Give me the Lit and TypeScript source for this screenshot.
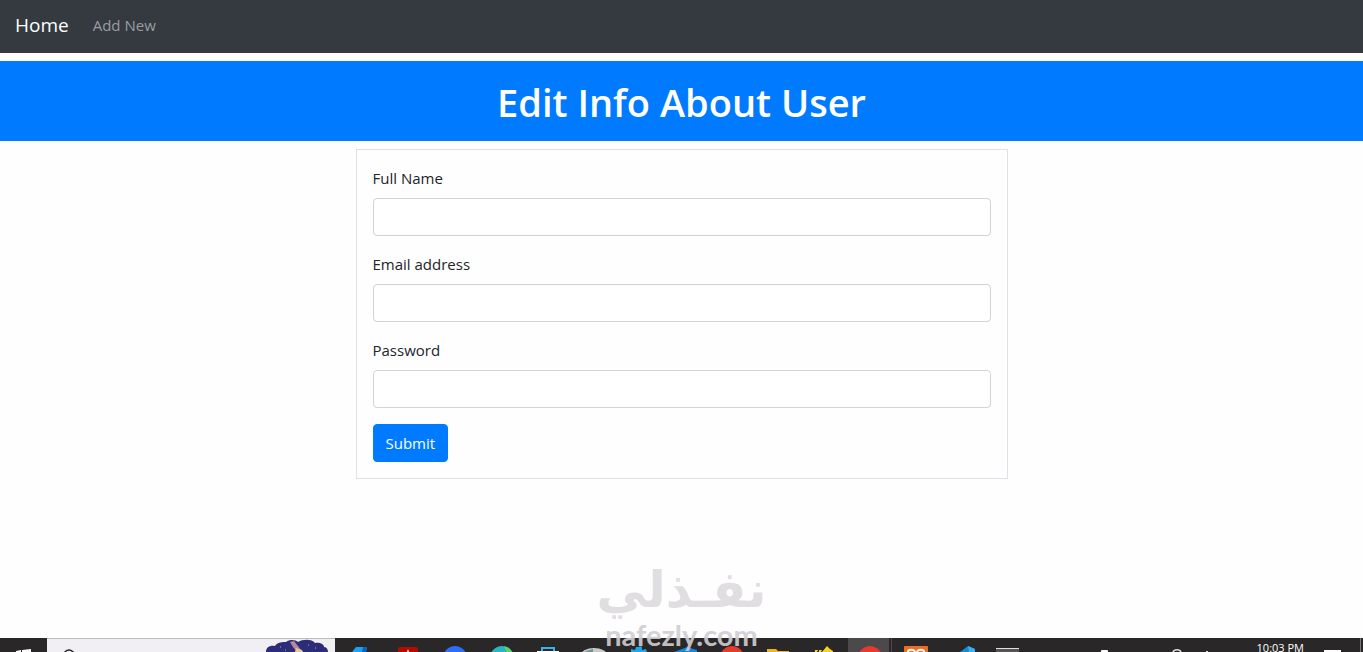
import { LitElement, html, svg, css } from "lit";
import { customElement } from "lit/decorators.js";

const apps = [
  { name: "Editor", art: svg`<path d="M18 9H29L28 14H14Z" fill="#1aa3f0"/><path d="M25 9h4l-1 5h-4z" fill="#0c62c4"/>` },
  { name: "Reader", art: svg`<rect x="14" y="9" width="20" height="12" rx="2" fill="#b30b00"/><path d="M24 11l1 3h-2z" fill="#fff"/>` },
  { name: "Calls", art: svg`<circle cx="25" cy="20" r="12" fill="#2f6df6"/>` },
  { name: "Browser", art: svg`<circle cx="26" cy="20" r="12" fill="#2cb5c0"/><path d="M28 8a12 12 0 0 1 9 8l-6-2z" fill="#5fd36a"/>` },
  { name: "Store", art: svg`<path d="M20 14V10H32V14" fill="none" stroke="#35b5e8" stroke-width="2"/><path d="M15 13H37V15H15Z" fill="#fff"/>` },
  { name: "Disk", art: svg`<ellipse cx="26" cy="17" rx="13" ry="7" fill="#c9cbca"/><path d="M18 13l7-2v3h-8z" fill="#6c9794"/>` },
  { name: "Settings", art: svg`<path d="M17 14v-3l4 1 1-3h3l1-1 2 1v3l4-1 1 3z" fill="#21a5ea"/>` },
  { name: "Code", art: svg`<path d="M14 14l8-3 5-2 10 3v2z" fill="#1687d9"/>` },
  { name: "Chrome", art: svg`<circle cx="26" cy="20" r="12" fill="#e53a2e"/>` },
  { name: "Files", art: svg`<path d="M15 11h9l2 2h11v4H15z" fill="#f0b51c"/>` },
  { name: "Notes", art: svg`<path d="M17 12h3l-1 2h-2zM21 12h3l-1 2h-2zM24 14l5-6 3 3 3 2v2z" fill="#f4d321"/>` },
  { name: "Chrome window", art: svg`<rect x="4" width="41" height="14" fill="#4b494b"/><circle cx="26" cy="20" r="12" fill="#e53a2e"/>` },
  { name: "XAMPP", art: svg`<path d="M1.500 0V14" stroke="#4b494b"/><rect x="14" y="8" width="24" height="14" rx="1" fill="#ee6c24"/><path d="M18 14c0-3 6-3 7 0m2 0c1-3 7-3 7 0" fill="none" stroke="#fff" stroke-width="2"/>` },
  { name: "Visual Studio Code", art: svg`<path d="M24 14l8-6 7 3v3z" fill="#168bd2"/><path d="M32 8l7 3v3h-6z" fill="#3cb0ef"/>` },
  { name: "Terminal", art: svg`<path d="M14 10H37V14H14Z" fill="#555"/><path d="M14 10.500H37" stroke="#e0e0e0"/>` },
];

const fields = [
  { id: "name", label: "Full Name", type: "text" },
  { id: "email", label: "Email address", type: "email" },
  { id: "password", label: "Password", type: "password" },
];

@customElement("app-root")
export class AppRoot extends LitElement {
  static styles = css`
    :host {
      display: block;
      color: #212529;
      font: 15px/24px "Segoe UI", "Open Sans", "Noto Sans", sans-serif;
    }
    * { box-sizing: border-box; }
    .page {
      position: relative;
      display: flex;
      flex-direction: column;
      min-height: 100vh;
      background: #fefefe;
      overflow: hidden;
    }
    .navbar {
      display: flex;
      align-items: center;
      gap: 24px;
      height: 53px;
      padding: 0 15px 3px;
      background: #343a40;
    }
    .navbar a { color: #9a9da0; text-decoration: none; }
    .navbar .brand { color: #fff; font-size: 19px; }
    .title {
      margin: 8px 0;
      padding: 17px 16px 15px;
      background: #007bff;
      color: #fff;
      font-size: 38px;
      font-weight: 600;
      line-height: 48px;
      text-align: center;
    }
    main { flex: 1; }
    .card {
      width: calc(100% - 32px);
      max-width: 652px;
      margin: 0 auto;
      padding: 16px;
      border: 1px solid #dee2e6;
    }
    .group { margin-bottom: 16px; }
    .group label { display: block; margin-bottom: 8px; }
    .group input {
      display: block;
      width: 100%;
      height: 38px;
      padding: 6px 12px;
      border: 1px solid #ced4da;
      border-radius: 4px;
      background: #fff;
      font: inherit;
    }
    .submit {
      display: block;
      height: 38px;
      padding: 0 12px;
      border: 1px solid #007bff;
      border-radius: 4px;
      background: #007bff;
      color: #fff;
      font: inherit;
    }
    .watermark {
      position: absolute;
      bottom: 0;
      left: 50%;
      transform: translateX(-50%);
      display: flex;
      flex-direction: column;
      align-items: center;
      pointer-events: none;
      white-space: nowrap;
    }
    .mark {
      color: #cdcacf;
      opacity: 0.6;
      font: bold 50px/56px "DejaVu Sans", sans-serif;
    }
    .domain {
      color: #d0ced2;
      opacity: 0.9;
      font: bold 29px/34px Lato, sans-serif;
    }
    .taskbar {
      display: flex;
      height: 14px;
      background: #292727;
      overflow: hidden;
    }
    .taskbar button {
      flex: none;
      padding: 0;
      border: 0;
      background: none;
    }
    .taskbar svg { display: block; }
    .start { width: 47px; }
    .search {
      flex: none;
      display: flex;
      justify-content: space-between;
      width: 288px;
      margin-right: 3px;
      border-top: 1px solid #bdbbc0;
      background: #f1eff3;
    }
    .apps { display: flex; }
    .tray {
      display: flex;
      margin-left: auto;
    }
    .clock {
      color: #fff;
      font-size: 11px;
      line-height: 20px;
    }
  `;

  render() {
    return html`
      <div class="page">
        <nav class="navbar">
          <a class="brand" href="#home">Home</a>
          <a href="#new">Add New</a>
        </nav>
        <h1 class="title">Edit Info About User</h1>
        <main>
          <form class="card" @submit=${(e: Event) => e.preventDefault()}>
            ${fields.map(
              (f) => html`<div class="group">
                <label for=${f.id}>${f.label}</label>
                <input id=${f.id} type=${f.type} />
              </div>`
            )}
            <button class="submit" type="submit">Submit</button>
          </form>
        </main>
        <footer class="taskbar">
          <button class="start" aria-label="Start">
            <svg width="47" height="14"><path d="M16 13l5-1v2h-5zM22 12l9-1v3h-9z" fill="#fff" /></svg>
          </button>
          <div class="search">
            <svg width="40" height="13"><circle cx="22" cy="16" r="5" fill="none" stroke="#222" stroke-width="1.500" /></svg>
            <svg width="70" height="13">
              <path d="M1 13C1 8 5 6 10 7 12 3 18 3 21 3 25 0 31 1 33 3 38 0 47 0 50 4 56 3 59 6 59 8 62 8 63 11 63 13Z" fill="#2c2c78" />
              <path d="M25 3l4-1 7 9-4 2-4-5z" fill="#b58a9c" />
              <path d="M31 9l6 2 1 2h-8z" fill="#e6c99a" />
              <path d="M15 8h1M43 6h1M50 9h1M20 11h1" stroke="#9da0dc" />
            </svg>
          </div>
          <div class="apps">
            ${apps.map(
              (a) => html`<button aria-label=${a.name}><svg width="46" height="14">${a.art}</svg></button>`
            )}
          </div>
          <div class="tray">
            <svg width="160" height="14">
              <rect x="4" y="12" width="7" height="3" rx="1" fill="#fff" />
              <path d="M76 14c1-3 7-3 8 0" fill="none" stroke="#ddd" stroke-width="1.500" />
              <rect x="109" y="13" width="2" height="1" fill="#ddd" />
            </svg>
            <time class="clock">10:03 PM</time>
            <svg width="59" height="14">
              <rect x="20" y="12" width="17" height="2" fill="#fff" />
              <path d="M56.500 0V14" stroke="#777" />
            </svg>
          </div>
        </footer>
        <div class="watermark">
          <span class="mark" lang="ar" dir="rtl">نفـذلي</span>
          <span class="domain">nafezly.com</span>
        </div>
      </div>
    `;
  }
}
